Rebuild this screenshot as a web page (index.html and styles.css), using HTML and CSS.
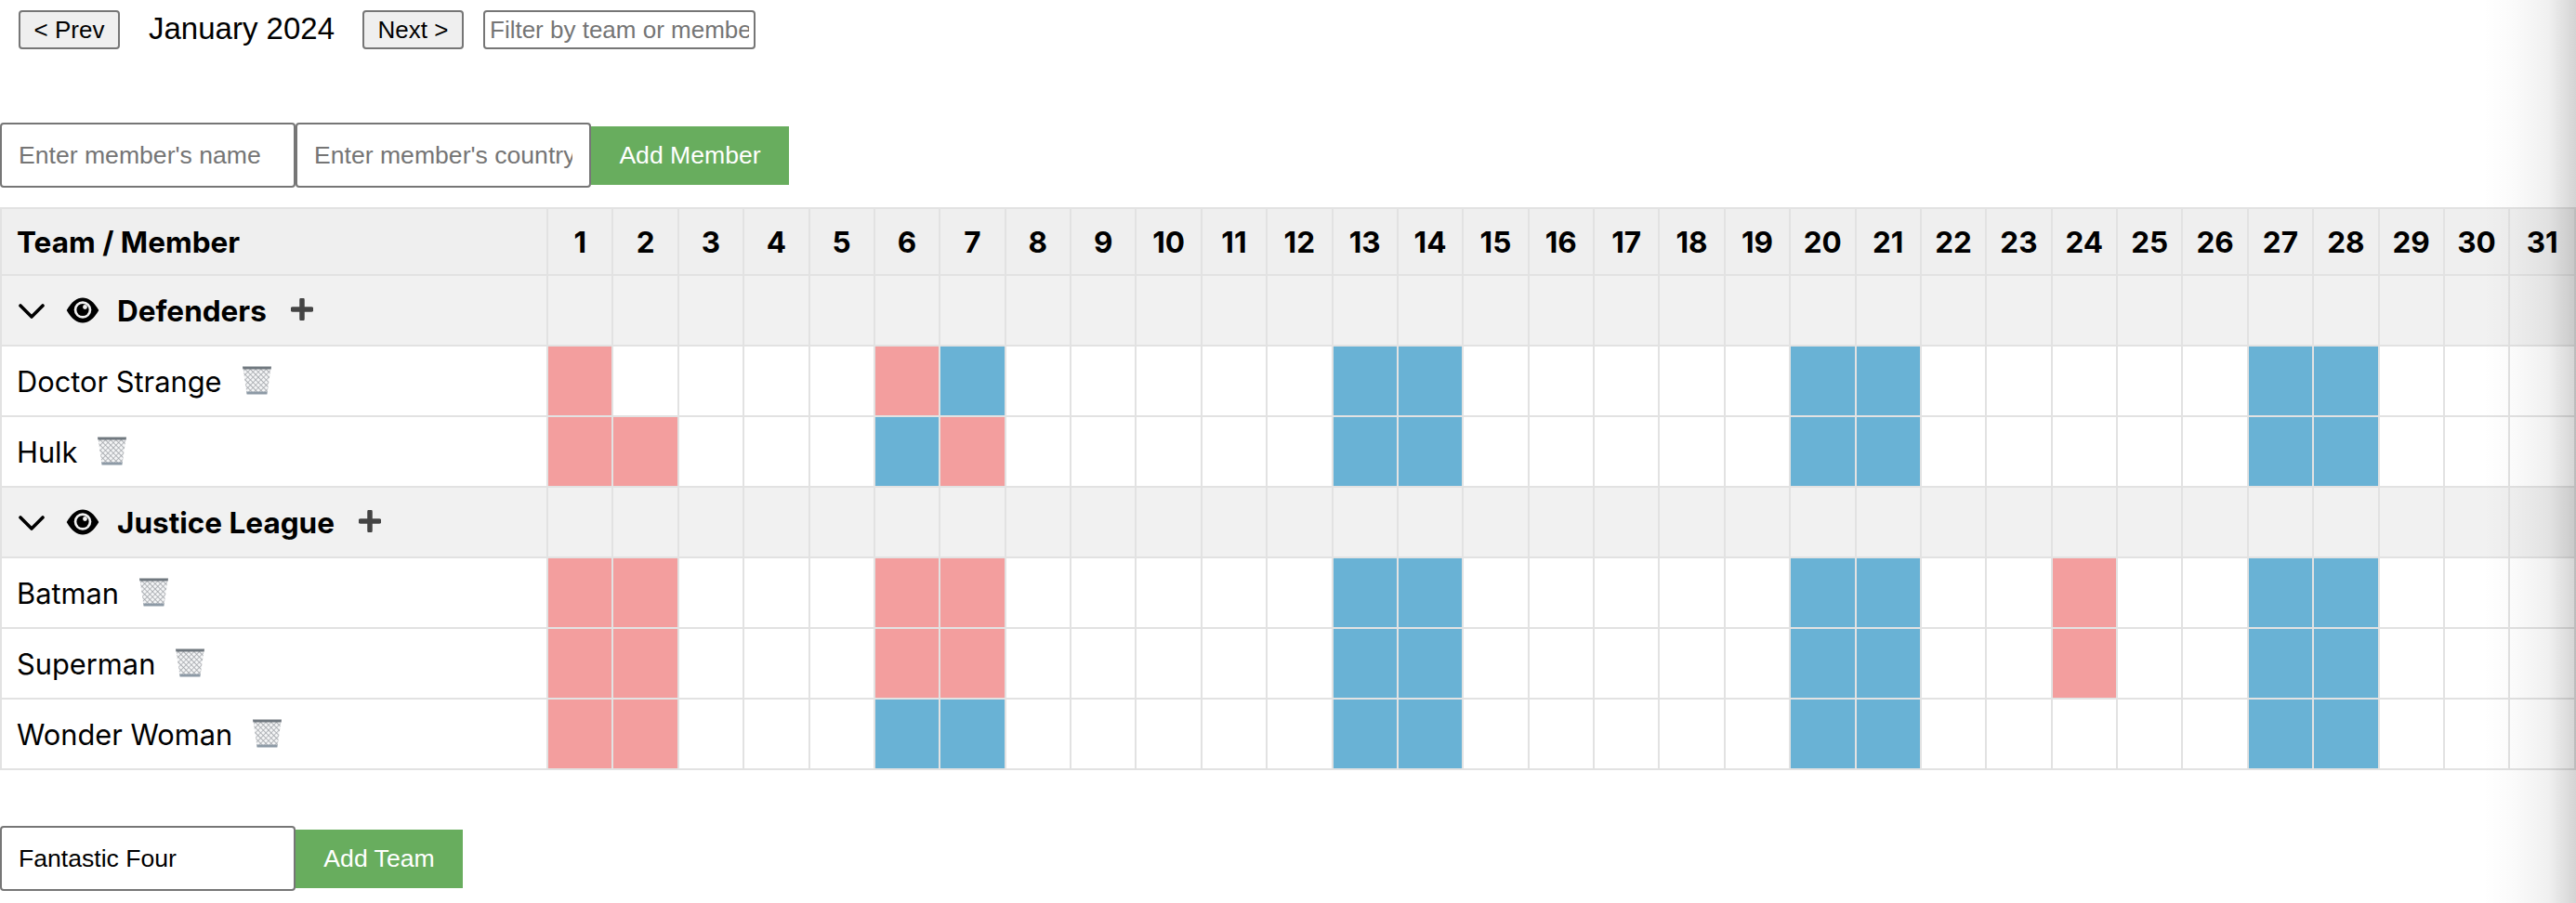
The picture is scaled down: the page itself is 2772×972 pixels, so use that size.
FILE: index.html
```html
<!DOCTYPE html>
<html lang="en">
<head>
<meta charset="UTF-8" />
<title>Team Calendar</title>
<link rel="stylesheet" href="styles.css">
</head>
<body>
<svg class="defs" width="0" height="0">
  <defs>
    <pattern id="mesh" width="4" height="4" patternUnits="userSpaceOnUse" patternTransform="rotate(45)">
      <rect width="4" height="4" fill="#f4f5f6" />
      <path d="M0 0H4M0 0V4" stroke="#9a9ea3" stroke-width="1.3" />
    </pattern>
    <symbol id="trash" viewBox="0 0 31 31">
      <path d="M.5 2H30.500L26.500 30H4.500Z" fill="url(#mesh)" />
      <path d="M0 .5H31L30.600 3.600H.4Z" fill="#70787f" />
      <path d="M4.300 27.600H26.700L26.400 30.600H4.600Z" fill="#8d9aa6" />
    </symbol>
    <symbol id="eye" viewBox="0 0 36 28">
      <path d="M.7 14C6 4.500 12 .5 18 .5S30 4.500 35.300 14C30 23.500 24 27.500 18 27.500S6 23.500 .7 14Z" fill="#000" />
      <circle cx="18" cy="13.500" r="9.300" fill="#f1f1f1" />
      <circle cx="18" cy="13.500" r="6.600" fill="#000" />
      <circle cx="20.500" cy="10.500" r="2.400" fill="#f1f1f1" />
    </symbol>
    <symbol id="chevron" viewBox="0 0 28 16">
      <path d="M2 2L14 14L26 2" fill="none" stroke="#000" stroke-width="3.600" stroke-linecap="round" stroke-linejoin="round" />
    </symbol>
    <symbol id="plus" viewBox="0 0 24 24">
      <path d="M12 2V22M2 12H22" fill="none" stroke="#444" stroke-width="5.500" stroke-linecap="round" />
    </symbol>
  </defs>
</svg>

<nav class="month-nav">
  <button type="button">&lt; Prev</button>
  <span class="month-title">January 2024</span>
  <button type="button">Next &gt;</button>
  <input type="text" class="filter" placeholder="Filter by team or member" />
</nav>

<form class="add-form member-form">
  <input type="text" placeholder="Enter member's name" />
  <input type="text" placeholder="Enter member's country" />
  <button type="button" class="btn-green member-btn">Add Member</button>
</form>

<table class="calendar" id="calendar"></table>

<form class="add-form team-form">
  <input type="text" value="Fantastic Four" />
  <button type="button" class="btn-green">Add Team</button>
</form>

<div class="edge-shadow"></div>

<script src="script.js"></script>
</body>
</html>
```

FILE: styles.css
```css
html, body { margin: 0; padding: 0; }
body { font-family: "Liberation Sans", Arial, sans-serif; background: #fff; color: #000; overflow: hidden; height: 972px; }

.defs { position: absolute; }

.month-nav { display: flex; align-items: center; padding: 11px 0 0 20px; height: 42px; }
.month-nav button {
  width: 109px; height: 42px; padding: 0; font: 26px "Liberation Sans", Arial, sans-serif;
  background: #efefef; color: #000; border: 2px solid #767676; border-radius: 4px;
}
.month-title { font-size: 33px; line-height: 36px; margin: -2px 31px 0 31px; width: 199px; white-space: nowrap; }
.month-nav .filter {
  width: 293px; height: 42px; margin-left: 21px; padding: 0 5px; box-sizing: border-box;
  font: 26px "Liberation Sans", Arial, sans-serif; border: 2px solid #767676; border-radius: 4px;
}

.add-form { display: flex; align-items: center; }
.add-form input {
  width: 318px; height: 70px; padding: 0 18px; box-sizing: border-box;
  font: 26.6px "Liberation Sans", Arial, sans-serif; color: #000;
  border: 2px solid #767676; border-radius: 4px;
}
.btn-green {
  height: 63px; padding: 0; font: 26.6px "Liberation Sans", Arial, sans-serif;
  background: #68ad5e; color: #fff; border: none; white-space: nowrap; width: 180px;
}
.member-btn { width: 213px; }
.member-form { margin-top: 79px; }
.team-form { margin-top: 60px; }

.calendar {
  margin-top: 21px; width: 2772px; table-layout: fixed; border-collapse: collapse;
  font-family: Inter, "Liberation Sans", sans-serif; font-size: 30.8px;
}
.calendar th, .calendar td { border: 2px solid #e2e2e2; padding: 0; }
.calendar .name-col { width: 588px; text-align: left; padding-left: 16px; box-sizing: border-box; }
.calendar th { height: 70px; background: #efefef; font-size: 31.5px; font-weight: 700; }
.team-row td { height: 74px; background: #f1f1f1; font-size: 31.5px; font-weight: 700; }
.member-row td { height: 74px; background: #fff; }
.member-row td.off { background: #f39e9e; }
.member-row td.weekend { background: #69b2d5; }

.cell-inner { display: flex; align-items: center; }
.chevron { width: 28px; height: 16px; margin-top: 2px; margin-left: 2px; }
.eye { width: 36px; height: 28px; margin-left: 23px; }
.team-name { margin-left: 19px; }
.plus { width: 24px; height: 24px; margin-left: 26px; margin-top: -2px; }
.trash { width: 31px; height: 31px; margin-left: 22px; margin-top: -1px; }

.edge-shadow {
  position: absolute; top: 0; right: 0; bottom: 0; width: 100px; pointer-events: none;
  background: linear-gradient(to right, rgba(0,0,0,0), rgba(0,0,0,.02) 35%, rgba(0,0,0,.06) 70%, rgba(0,0,0,.17));
}
```

FILE: script.js
```js
// days off per member, the rest is weekends
const weekend = [6, 7, 13, 14, 20, 21, 27, 28];

const teams = [
  { name: "Defenders", members: [
    { name: "Doctor Strange", off: [1, 6], free: [7, 13, 14, 20, 21, 27, 28] },
    { name: "Hulk", off: [1, 2, 7], free: [6, 13, 14, 20, 21, 27, 28] }
  ] },
  { name: "Justice League", members: [
    { name: "Batman", off: [1, 2, 6, 7, 24], free: [13, 14, 20, 21, 27, 28] },
    { name: "Superman", off: [1, 2, 6, 7, 24], free: [13, 14, 20, 21, 27, 28] },
    { name: "Wonder Woman", off: [1, 2], free: weekend }
  ] }
];

const icon = (id) => `<svg class="${id}"><use href="#${id}" /></svg>`;

let html = `<tr><th class="name-col">Team / Member</th>`;
for (let d = 1; d <= 31; d++) html += `<th>${d}</th>`;
html += `</tr>`;

teams.forEach((team) => {
  html += `<tr class="team-row"><td class="name-col"><div class="cell-inner">${icon("chevron")}${icon("eye")}<span class="team-name">${team.name}</span>${icon("plus")}</div></td>`;
  for (let d = 1; d <= 31; d++) html += `<td></td>`;
  html += `</tr>`;

  team.members.forEach((m) => {
    html += `<tr class="member-row"><td class="name-col"><div class="cell-inner"><span>${m.name}</span>${icon("trash")}</div></td>`;
    for (let d = 1; d <= 31; d++) {
      let cls = "";
      if (m.off.includes(d)) cls = "off";
      else if (m.free.includes(d)) cls = "weekend";
      html += `<td class="${cls}"></td>`;
    }
    html += `</tr>`;
  });
});

document.getElementById("calendar").innerHTML = html;
```
